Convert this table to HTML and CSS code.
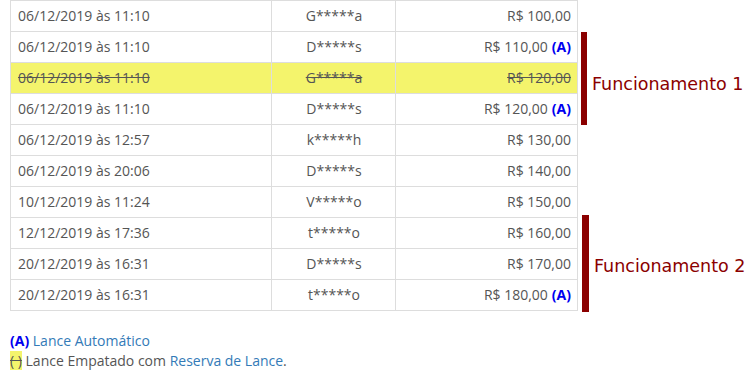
FILE: index.html
```html
<!DOCTYPE html>
<html lang="pt-BR">
<head>
<meta charset="utf-8">
<title>Lances</title>
<link rel="stylesheet" href="styles.css">
</head>
<body>
<div class="page">
  <div class="bids">
    <div class="group g1"><span class="label">Funcionamento 1</span></div>
    <div class="group g2"><span class="label">Funcionamento 2</span></div>

    <div class="cell c1 first">06/12/2019 às 11:10</div>
    <div class="cell c2 first">G*****a</div>
    <div class="cell c3 first">R$ 100,00</div>

    <div class="cell c1">06/12/2019 às 11:10</div>
    <div class="cell c2">D*****s</div>
    <div class="cell c3">R$ 110,00 <b class="auto">(A)</b></div>

    <div class="cell c1 tied">06/12/2019 às 11:10</div>
    <div class="cell c2 tied">G*****a</div>
    <div class="cell c3 tied">R$ 120,00</div>

    <div class="cell c1">06/12/2019 às 11:10</div>
    <div class="cell c2">D*****s</div>
    <div class="cell c3">R$ 120,00 <b class="auto">(A)</b></div>

    <div class="cell c1">06/12/2019 às 12:57</div>
    <div class="cell c2">k*****h</div>
    <div class="cell c3">R$ 130,00</div>

    <div class="cell c1">06/12/2019 às 20:06</div>
    <div class="cell c2">D*****s</div>
    <div class="cell c3">R$ 140,00</div>

    <div class="cell c1">10/12/2019 às 11:24</div>
    <div class="cell c2">V*****o</div>
    <div class="cell c3">R$ 150,00</div>

    <div class="cell c1">12/12/2019 às 17:36</div>
    <div class="cell c2">t*****o</div>
    <div class="cell c3">R$ 160,00</div>

    <div class="cell c1">20/12/2019 às 16:31</div>
    <div class="cell c2">D*****s</div>
    <div class="cell c3">R$ 170,00</div>

    <div class="cell c1">20/12/2019 às 16:31</div>
    <div class="cell c2">t*****o</div>
    <div class="cell c3">R$ 180,00 <b class="auto">(A)</b></div>
  </div>

  <div class="legend">
    <div class="legend-line"><b class="auto">(A)</b> <a class="link" href="#">Lance Automático</a></div>
    <div class="legend-line"><span class="tied-mark">( )</span> Lance Empatado com <a class="link" href="#">Reserva de Lance</a>.</div>
  </div>
</div>
</body>
</html>
```

FILE: styles.css
```css
html, body {
  margin: 0;
  padding: 0;
  background: #fff;
}

.page {
  padding: 0 10px;
  font-family: "Open Sans", "Liberation Sans", sans-serif;
  font-size: 14px;
  color: #555;
}

.bids {
  display: grid;
  grid-template-columns: 262px 124px 182px 1fr;
  grid-template-rows: 32px repeat(9, 31px);
}

.cell {
  box-sizing: border-box;
  display: flex;
  align-items: center;
  padding: 0 6px 1px 7px;
  border-right: 1px solid #ddd;
  border-bottom: 1px solid #ddd;
  line-height: 20px;
  white-space: nowrap;
}

.cell.first {
  border-top: 1px solid #ddd;
}

.c1 {
  grid-column: 1;
  border-left: 1px solid #ddd;
}

.c2 {
  grid-column: 2;
  justify-content: center;
}

.c3 {
  grid-column: 3;
  justify-content: flex-end;
}

.auto {
  color: #0000f0;
  font-weight: 700;
  margin-left: 4px;
}

.tied {
  background: #f4f46c;
  text-decoration: line-through;
}

.group {
  grid-column: 4;
  display: flex;
  align-items: center;
  border-left: 6px solid #8b0000;
  font-family: "DejaVu Sans", sans-serif;
  font-size: 17.5px;
  color: #8b0000;
  white-space: nowrap;
}

.g1 {
  grid-row: 2 / 5;
  margin-left: 3px;
  padding: 10px 0 0 5px;
}

.g2 {
  grid-row: 8 / 11;
  margin: -3px 0 -1px 4px;
  border-left-width: 7px;
  padding: 5px 0 0 5px;
}

.legend {
  margin-top: 20px;
  line-height: 20px;
}

.legend .auto {
  margin-left: 0;
}

.link {
  color: #337ab7;
  text-decoration: none;
}

.tied-mark {
  background: #f4f46c;
  text-decoration: line-through;
}
```
